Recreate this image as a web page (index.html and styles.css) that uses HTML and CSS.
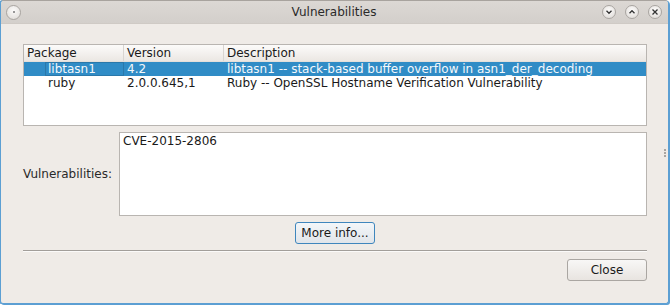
FILE: index.html
```html
<!DOCTYPE html>
<html>
<head>
<meta charset="utf-8">
<link rel="stylesheet" href="styles.css">
</head>
<body>
<div class="window">
  <div class="titlebar">
    <div class="tb-left"><span class="circle"><span class="dot"></span></span></div>
    <div class="title">Vulnerabilities</div>
    <div class="tb-right">
      <span class="circle"><svg width="8" height="8" viewBox="0 0 8 8"><path d="M1.5 2.8 L4 5.3 L6.5 2.8" fill="none" stroke="#333" stroke-width="1.3"/></svg></span>
      <span class="circle"><svg width="8" height="8" viewBox="0 0 8 8"><path d="M1.5 5.2 L4 2.7 L6.5 5.2" fill="none" stroke="#333" stroke-width="1.3"/></svg></span>
      <span class="circle"><svg width="8" height="8" viewBox="0 0 8 8"><path d="M1.5 1.5 L6.5 6.5 M6.5 1.5 L1.5 6.5" fill="none" stroke="#333" stroke-width="1.3"/></svg></span>
    </div>
  </div>
  <div class="content">
    <div class="table">
      <div class="row header">
        <div class="c1">Package</div>
        <div class="c2">Version</div>
        <div class="c3">Description</div>
      </div>
      <div class="row selected">
        <div class="c1"><span class="focus">libtasn1</span></div>
        <div class="c2">4.2</div>
        <div class="c3">libtasn1 -- stack-based buffer overflow in asn1_der_decoding</div>
      </div>
      <div class="row">
        <div class="c1"><span class="pkg">ruby</span></div>
        <div class="c2">2.0.0.645,1</div>
        <div class="c3">Ruby -- OpenSSL Hostname Verification Vulnerability</div>
      </div>
    </div>
    <div class="vulns">
      <div class="label">Vulnerabilities:</div>
      <div class="textbox">CVE-2015-2806</div>
    </div>
    <div class="moreinfo-row"><button class="btn focused">More info...</button></div>
    <div class="sep"></div>
    <div class="bottom-row"><button class="btn close">Close</button></div>
  </div>
  <div class="grip"><i></i><i></i><i></i></div>
</div>
</body>
</html>
```
FILE: styles.css
```css
html, body {
  margin: 0;
  padding: 0;
  background: #ffffff;
}
body {
  width: 670px;
  height: 305px;
  font-family: "DejaVu Sans", sans-serif;
  font-size: 12px;
  color: #1a1a1a;
}
.window {
  position: relative;
  box-sizing: border-box;
  width: 669px;
  height: 304px;
  border: 1px solid #5c9fd3;
  border-top-color: #a8a39e;
  border-radius: 4px 4px 3px 3px;
  background: #efebe7;
  box-shadow: 1px 1px 0 #5c9fd3, -1px 0 0 #5c9fd3;
  overflow: hidden;
}
.titlebar {
  height: 22px;
  background: linear-gradient(#dcd8d4, #d3cfcb);
  display: flex;
  align-items: center;
  padding: 0 6px 0 5px;
  border-bottom: 1px solid #cfcac5;
}
.tb-left, .tb-right {
  display: flex;
  gap: 9px;
  width: 60px;
}
.tb-right { justify-content: flex-end; }
.title {
  flex: 1;
  text-align: center;
  font-size: 12px;
  color: #2a2a2a;
}
.circle {
  width: 15px;
  height: 15px;
  box-sizing: border-box;
  border-radius: 50%;
  border: 1px solid #a9a5a1;
  background: radial-gradient(circle at 50% 35%, #fbfaf9, #dedad6);
  display: flex;
  align-items: center;
  justify-content: center;
}
.tb-right .circle { width: 14px; height: 14px; }
.dot {
  width: 2px;
  height: 2px;
  border-radius: 50%;
  background: #777;
}
.content {
  padding: 20px 21px 0 22px;
}
.table {
  height: 80px;
  border: 1px solid #b9b5b1;
  background: #fff;
}
.row {
  display: flex;
  height: 14px;
  line-height: 14px;
  white-space: nowrap;
}
.row.header {
  height: 16px;
  line-height: 16px;
  background: linear-gradient(#fcfbfa, #ebe7e3);
  border-bottom: 1px solid #e3dfdb;
}
.row.header > div {
  box-sizing: border-box;
  padding-left: 3px;
  border-right: 1px solid #d9d5d1;
}
.row.header .c3 { border-right: none; }
.c1 { width: 100px; box-sizing: border-box; }
.c2 { width: 100px; box-sizing: border-box; padding-left: 3px; }
.c3 { flex: 1; box-sizing: border-box; padding-left: 3px; overflow: hidden; }
.row.selected {
  background: #308cc6;
  color: #f4f8fb;
}
.row .c1 { padding-left: 21px; }
.row.header .c1 { padding-left: 3px; }
.focus {
  display: block;
  box-sizing: border-box;
  height: 14px;
  padding-left: 2px;
  border: 1px solid #2a78aa;
  line-height: 12px;
}
.pkg { padding-left: 3px; }
.vulns {
  display: flex;
  align-items: center;
  margin-top: 6px;
}
.label {
  width: 96px;
  color: #2a2a2a;
}
.textbox {
  flex: 1;
  height: 84px;
  box-sizing: border-box;
  border: 1px solid #b9b5b1;
  background: #fff;
  padding: 1px 3px;
  line-height: 14px;
}
.btn {
  font-family: "DejaVu Sans", sans-serif;
  font-size: 12px;
  color: #1a1a1a;
  height: 22px;
  box-sizing: border-box;
  border-radius: 3px;
  border: 1px solid #aaa6a2;
  background: linear-gradient(#f8f7f6, #e8e4e0);
  padding: 0;
  width: 80px;
}
.btn.focused {
  border-color: #3f86bd;
  background: linear-gradient(#f3f6f9, #e1e5ea);
}
.moreinfo-row {
  display: flex;
  justify-content: center;
  margin-top: 6px;
}
.sep {
  margin-top: 6px;
  height: 1px;
  background: #a29e9a;
  border-bottom: 1px solid #fbfaf9;
}
.bottom-row {
  display: flex;
  justify-content: flex-end;
  margin-top: 7px;
}
.grip {
  position: absolute;
  right: 2px;
  top: 148px;
  display: flex;
  flex-direction: column;
  gap: 1px;
}
.grip i {
  width: 2px;
  height: 2px;
  background: #a9a5a1;
}
```
